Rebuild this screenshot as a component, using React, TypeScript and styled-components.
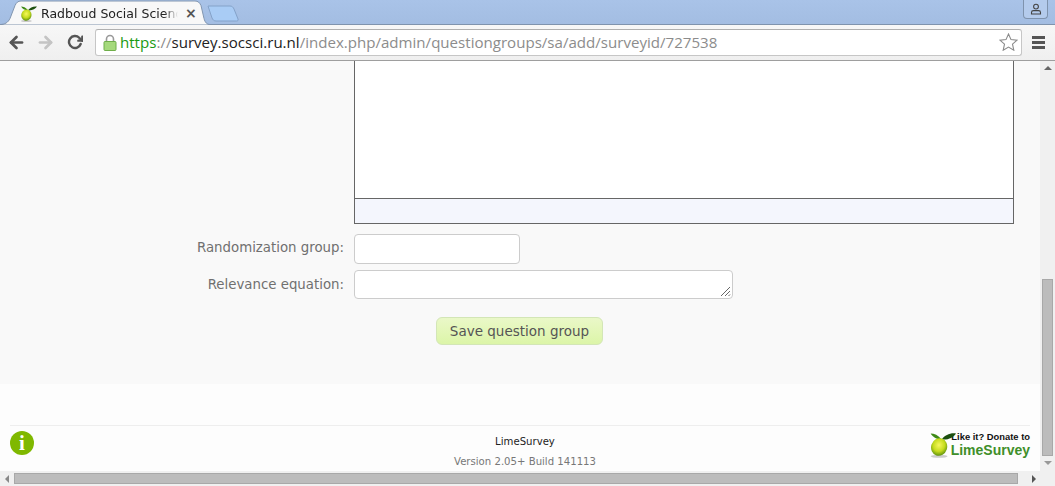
import styled, { createGlobalStyle } from "styled-components";
import { FiArrowLeft, FiArrowRight, FiRotateCw } from "react-icons/fi";

const GlobalStyle = createGlobalStyle`
  html, body { margin: 0; padding: 0; background: #fff; overflow: hidden; }
  * { box-sizing: border-box; }
`;

function LimeIcon({ size }: { size: number }) {
  return (
    <LimeSvg width={size} height={size} viewBox="0 0 32 32">
      <defs>
        <radialGradient id={`lime${size}`} cx="0.45" cy="0.4" r="0.65">
          <stop offset="0" stopColor="#f6f75e" />
          <stop offset="0.55" stopColor="#c6dc1e" />
          <stop offset="1" stopColor="#4f860c" />
        </radialGradient>
      </defs>
      <ellipse cx="12" cy="30" rx="10" ry="1.800" fill="#aaa" opacity="0.6" />
      <path d="M15 10C11 5 6 3 2 3c2 4 7 7 13 7z" fill="#3f8a17" />
      <path d="M15 10c4-5 10-8 17-7-3 5-10 8-17 7z" fill="#1c4f0e" />
      <ellipse cx="12" cy="19" rx="9.500" ry="10.500" transform="rotate(18 12 19)" fill={`url(#lime${size})`} />
    </LimeSvg>
  );
}

export default function App() {
  return (
    <>
      <GlobalStyle />
      <Window>
        <TabStrip>
          <ActiveTab>
            <TabShape viewBox="0 0 210 25">
              <path d="M0 24.500c5 0 8-2 10-6l5-13c1.500-3 3-4.500 6-4.500h174c3 0 4.500 1.500 6 4.500l3 13c1 4 3 6 6 6" fill="#f8f8f8" stroke="#8296b0" strokeWidth="1" />
            </TabShape>
            <LimeIcon size={17} />
            <TabTitle>Radboud Social Science</TabTitle>
            <TabClose>×</TabClose>
          </ActiveTab>
          <NewTab viewBox="0 0 32 17">
            <path d="M1 1h22c2 0 3 1 4 3l4 10c.4 1.500-.3 2-1.500 2H9c-2 0-3-1-4-3L1 1z" fill="#a9ccf5" stroke="#84a2c9" />
          </NewTab>
          <ProfileBadge>
            <svg width="12" height="12" viewBox="0 0 12 12">
              <circle cx="6" cy="3.600" r="2.400" fill="none" stroke="#444" strokeWidth="1.100" />
              <path d="M1.500 11V9.400c0-1 1-1.800 2-1.800h5c1 0 2 .8 2 1.800V11z" fill="none" stroke="#444" strokeWidth="1.100" />
            </svg>
          </ProfileBadge>
        </TabStrip>
        <Toolbar>
          <NavButton $color="#555"><FiArrowLeft size={19} strokeWidth={3.4} /></NavButton>
          <NavButton $color="#c4c4c4"><FiArrowRight size={19} strokeWidth={3.4} /></NavButton>
          <NavButton $color="#555"><FiRotateCw size={16} strokeWidth={3.6} /></NavButton>
          <Omnibox>
            <svg width="14" height="17" viewBox="0 0 14 17">
              <path d="M3.500 8V5a3.500 3.500 0 0 1 7 0v3" fill="none" stroke="#999" strokeWidth="1.600" />
              <rect x="1" y="7.500" width="12" height="9" rx="1" fill="#a5d97c" stroke="#6fae4a" />
            </svg>
            <UrlText>
              <UrlScheme>https</UrlScheme>
              <UrlDim>://</UrlDim>
              <UrlHost>survey.socsci.ru.nl</UrlHost>
              <UrlDim>/index.php/admin/questiongroups/sa/add/surveyid/727538</UrlDim>
            </UrlText>
            <StarIcon width="19" height="18" viewBox="0 0 19 18">
              <path d="M9.500 1l2.500 5.600 6 .6-4.500 4 1.300 6-5.300-3.100-5.300 3.100 1.300-6L1 7.200l6-.6z" fill="#fff" stroke="#8a8a8a" strokeWidth="1.100" />
            </StarIcon>
          </Omnibox>
          <MenuIcon>
            <MenuBar />
            <MenuBar />
            <MenuBar />
          </MenuIcon>
        </Toolbar>
        <Viewport>
          <Page>
            <FormPanel>
              <Editor>
                <EditorBody />
                <EditorBar />
              </Editor>
              <FormRow $top={10}>
                <FieldLabel $lift={3}>Randomization group:</FieldLabel>
                <TextField />
              </FormRow>
              <FormRow $top={6}>
                <FieldLabel $lift={0}>Relevance equation:</FieldLabel>
                <TextBlock>
                  <ResizeGrip width="11" height="11" viewBox="0 0 11 11">
                    <path d="M1 10l9-9M5 10l5-5M8.500 10l1.500-1.500" stroke="#666" strokeWidth="1" />
                  </ResizeGrip>
                </TextBlock>
              </FormRow>
              <SaveRow>
                <SaveButton>Save question group</SaveButton>
              </SaveRow>
            </FormPanel>
            <Footer>
              <FooterGrid>
                <InfoIcon>i</InfoIcon>
                <FooterCenter>
                  <FooterName>LimeSurvey</FooterName>
                  <FooterVersion>Version 2.05+ Build 141113</FooterVersion>
                </FooterCenter>
                <Donate>
                  <LimeIcon size={27} />
                  <DonateText>
                    <DonateLine>Like it? Donate to</DonateLine>
                    <DonateBrand>LimeSurvey</DonateBrand>
                  </DonateText>
                </Donate>
              </FooterGrid>
            </Footer>
          </Page>
          <VScroll>
            <Arrow $dir="up" />
            <VThumb />
            <Arrow $dir="down" />
          </VScroll>
          <HScroll>
            <Arrow $dir="left" />
            <HThumb />
            <Arrow $dir="right" />
          </HScroll>
          <ScrollCorner />
        </Viewport>
      </Window>
    </>
  );
}

const Window = styled.div`
  width: 1055px;
  height: 486px;
  display: flex;
  flex-direction: column;
  overflow: hidden;
  font-family: "DejaVu Sans", sans-serif;
`;
const TabStrip = styled.div`
  height: 25px;
  flex: none;
  display: flex;
  align-items: flex-start;
  background: linear-gradient(#a9c3e8, #a3bde2);
  border-bottom: 1px solid #7f93ad;
`;
const ActiveTab = styled.div`
  position: relative;
  width: 210px;
  height: 25px;
  flex: none;
  display: flex;
  align-items: center;
  padding: 1px 0 0 20px;
  gap: 4px;
`;
const TabShape = styled.svg`
  position: absolute;
  left: 0;
  top: 0;
  width: 210px;
  height: 25px;
`;
const LimeSvg = styled.svg`
  position: relative;
  flex: none;
`;
const TabTitle = styled.span`
  position: relative;
  width: 137px;
  overflow: hidden;
  white-space: nowrap;
  font: 12.500px "DejaVu Sans", sans-serif;
  color: #222;
  mask-image: linear-gradient(to right, #000 90%, transparent);
`;
const TabClose = styled.span`
  position: relative;
  margin-left: 3px;
  font: bold 14px "DejaVu Sans", sans-serif;
  color: #555;
`;
const NewTab = styled.svg`
  width: 32px;
  height: 17px;
  margin: 5px 0 0 -3px;
  flex: none;
`;
const ProfileBadge = styled.div`
  margin-left: auto;
  margin-right: 7px;
  width: 25px;
  height: 19px;
  display: flex;
  align-items: center;
  justify-content: center;
  background: #b4cbec;
  border: 1px solid #7f93ad;
  border-top: none;
  border-radius: 0 0 4px 4px;
`;
const Toolbar = styled.div`
  height: 36px;
  flex: none;
  display: flex;
  align-items: center;
  padding: 0 7px 1px 5px;
  background: linear-gradient(#f7f7f7, #efefef);
  border-bottom: 1px solid #9e9e9e;
`;
const NavButton = styled.div<{ $color: string }>`
  width: 23px;
  height: 24px;
  margin-right: 6px;
  display: flex;
  align-items: center;
  justify-content: center;
  color: ${(p) => p.$color};
`;
const Omnibox = styled.div`
  width: 927px;
  height: 27px;
  margin: 0 10px 0 3px;
  flex: none;
  display: flex;
  align-items: center;
  padding: 0 3px 0 7px;
  gap: 3px;
  background: #fff;
  border: 1px solid #c6c6c6;
  border-top-color: #b0b0b0;
  border-radius: 3px;
`;
const UrlText = styled.div`
  flex: 1;
  font: 15.090px "Open Sans", sans-serif;
  white-space: nowrap;
`;
const UrlScheme = styled.span`
  color: #1a9a12;
`;
const UrlDim = styled.span`
  color: #8c8c8c;
`;
const UrlHost = styled.span`
  color: #222;
`;
const StarIcon = styled.svg`
  flex: none;
`;
const MenuIcon = styled.div`
  display: flex;
  flex-direction: column;
  gap: 2px;
`;
const MenuBar = styled.span`
  width: 13px;
  height: 3px;
  background: #555;
`;
const Viewport = styled.div`
  flex: 1;
  min-height: 0;
  display: grid;
  grid-template-columns: 1fr 15px;
  grid-template-rows: 1fr 15px;
`;
const Page = styled.div`
  min-height: 0;
  overflow: hidden;
  background: #fdfdfd;
`;
const FormPanel = styled.div`
  height: 323px;
  background: #f9f9f9;
`;
const Editor = styled.div`
  width: 660px;
  height: 163px;
  margin-left: 354px;
  display: flex;
  flex-direction: column;
  border: 1px solid #666;
  border-top: none;
`;
const EditorBody = styled.div`
  flex: 1;
  background: #fff;
  border-bottom: 1px solid #666;
`;
const EditorBar = styled.div`
  height: 24px;
  background: #f4f6fd;
`;
const FormRow = styled.div<{ $top: number }>`
  display: flex;
  align-items: center;
  margin-top: ${(p) => p.$top}px;
`;
const FieldLabel = styled.label<{ $lift: number }>`
  width: 344px;
  margin: 0 10px ${(p) => p.$lift}px 0;
  text-align: right;
  font-size: 13.330px;
  color: #707070;
`;
const TextField = styled.div`
  width: 166px;
  height: 30px;
  background: #fff;
  border: 1px solid #ccc;
  border-radius: 4px;
`;
const TextBlock = styled.div`
  position: relative;
  width: 379px;
  height: 29px;
  background: #fff;
  border: 1px solid #ccc;
  border-radius: 4px;
`;
const ResizeGrip = styled.svg`
  position: absolute;
  right: 1px;
  bottom: 1px;
`;
const SaveRow = styled.div`
  display: flex;
  margin: 18px 0 0 436px;
`;
const SaveButton = styled.button`
  width: 167px;
  height: 28px;
  padding: 0;
  font: 13.500px "DejaVu Sans", sans-serif;
  color: #555;
  background: linear-gradient(#eaf8c8, #dcf5a8);
  border: 1px solid #d3e6b6;
  border-radius: 6px;
`;
const Footer = styled.div`
  padding: 41px 10px 0;
`;
const FooterGrid = styled.div`
  display: grid;
  grid-template-columns: 1fr auto 1fr;
  align-items: start;
  width: 1020px;
  height: 46px;
  padding-top: 5px;
  border-top: 1px solid #eeeeee;
`;
const InfoIcon = styled.div`
  width: 24px;
  height: 24px;
  border-radius: 50%;
  display: flex;
  align-items: center;
  justify-content: center;
  background: #7fb800;
  color: #fff;
  font: bold 21px "Liberation Serif", serif;
`;
const FooterCenter = styled.div`
  display: flex;
  flex-direction: column;
  align-items: center;
  gap: 9px;
  padding: 5px 0 0 10px;
`;
const FooterName = styled.div`
  font: 10.130px "DejaVu Sans", sans-serif;
  color: #222;
`;
const FooterVersion = styled.div`
  font: 10.130px "DejaVu Sans", sans-serif;
  color: #777;
`;
const Donate = styled.div`
  justify-self: end;
  display: flex;
  align-items: flex-start;
`;
const DonateText = styled.div`
  margin-left: -5px;
  display: flex;
  flex-direction: column;
  align-items: flex-end;
`;
const DonateLine = styled.div`
  font: bold 9.400px "Liberation Sans", sans-serif;
  color: #111;
`;
const DonateBrand = styled.div`
  font: bold 14px "Liberation Sans", sans-serif;
  color: #3f8f2a;
`;
const VScroll = styled.div`
  display: flex;
  flex-direction: column;
  align-items: center;
  justify-content: space-between;
  padding-top: 5px;
  background: #f0f0f0;
`;
const VThumb = styled.div`
  width: 11px;
  height: 177px;
  margin-top: auto;
  background: #bcbcbc;
  border: 1px solid #a8a8a8;
`;
const HScroll = styled.div`
  display: flex;
  align-items: center;
  padding: 0 4px 0 5px;
  gap: 5px;
  background: #f0f0f0;
`;
const HThumb = styled.div`
  width: 1004px;
  height: 11px;
  margin-right: auto;
  background: #bcbcbc;
  border: 1px solid #a8a8a8;
`;
const ScrollCorner = styled.div`
  background: #f0f0f0;
`;
const Arrow = styled.span<{ $dir: "up" | "down" | "left" | "right" }>`
  width: 0;
  height: 0;
  flex: none;
  border: 4px solid transparent;
  ${(p) =>
    p.$dir === "up"
      ? "border-top: none; border-bottom-color: #666;"
      : p.$dir === "down"
        ? "border-bottom: none; border-top-color: #999; margin: 5px 0 6px;"
        : p.$dir === "left"
          ? "border-left: none; border-right-color: #888;"
          : "border-right: none; border-left-color: #555;"}
`;
